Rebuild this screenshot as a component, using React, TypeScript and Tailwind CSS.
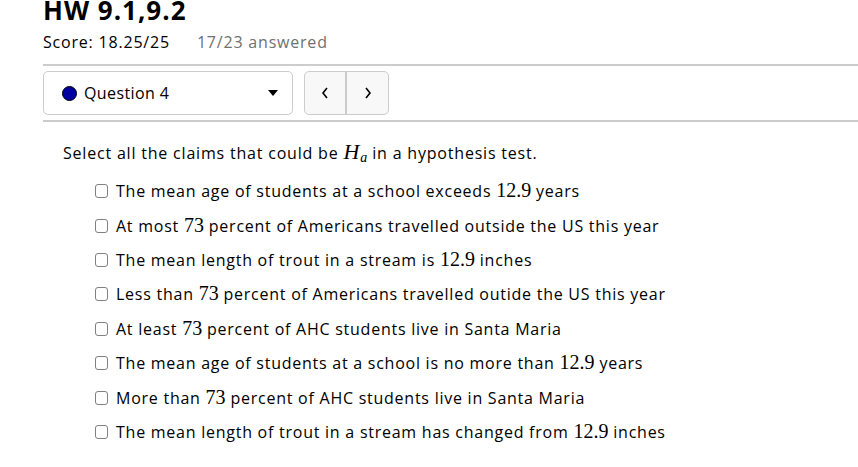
import React from 'react'

const font = {fontFamily: '"Open Sans", "DejaVu Sans", sans-serif'}

function M({children, italic}: {children: React.ReactNode; italic?: boolean}) {
  return (
    <span
      className={'text-[20px] tracking-normal leading-[0] ' + (italic ? 'italic' : '')}
      style={{fontFamily: '"Liberation Serif", "DejaVu Serif", serif'}}
    >
      {children}
    </span>
  )
}

const claims: React.ReactNode[] = [
  <>The mean age of students at a school exceeds <M>12.9</M> years</>,
  <>At most <M>73</M> percent of Americans travelled outside the US this year</>,
  <>The mean length of trout in a stream is <M>12.9</M> inches</>,
  <>Less than <M>73</M> percent of Americans travelled outide the US this year</>,
  <>At least <M>73</M> percent of AHC students live in Santa Maria</>,
  <>The mean age of students at a school is no more than <M>12.9</M> years</>,
  <>More than <M>73</M> percent of AHC students live in Santa Maria</>,
  <>The mean length of trout in a stream has changed from <M>12.9</M> inches</>,
]

export default function App() {
  return (
    <div className="w-[858px] h-[467px] overflow-hidden bg-white text-black" style={font}>
      <div className="pl-[43px]">
        <h1 className="text-[26px] leading-[26px] font-bold mt-[-3px] tracking-[1px]">HW 9.1,9.2</h1>
        <div className="flex gap-[27px] text-[16px] leading-[20px] mt-[9px] tracking-[0.8px]">
          <span>Score: 18.25/25</span>
          <span className="text-[#707070]">17/23 answered</span>
        </div>
        <div className="h-[2px] bg-[#cccccc] mt-[12px]" />
        <div className="flex gap-[11px] mt-[5px]">
          <div className="w-[250px] h-[44px] border border-[#cccccc] rounded-[5px] flex items-center pl-[18px] pr-[14px]">
            <span className="w-[15px] h-[15px] rounded-full bg-[#0000a0] border border-black" />
            <span className="ml-[7px] text-[16px] tracking-[0.4px]">Question 4</span>
            <span className="ml-auto w-0 h-0 border-l-[5px] border-r-[5px] border-t-[6px] border-l-transparent border-r-transparent border-t-black" />
          </div>
          <div className="flex h-[44px] border border-[#cccccc] rounded-[5px] bg-[#f8f8f8]">
            <div className="w-[42px] flex items-center justify-center border-r-2 border-[#cccccc]">
              <svg width="8" height="12" viewBox="0 0 8 12"><path d="M6 1 L2 6 L6 11" stroke="black" strokeWidth="1.6" fill="none" /></svg>
            </div>
            <div className="w-[41px] flex items-center justify-center">
              <svg width="8" height="12" viewBox="0 0 8 12"><path d="M2 1 L6 6 L2 11" stroke="black" strokeWidth="1.6" fill="none" /></svg>
            </div>
          </div>
        </div>
        <div className="h-[2px] bg-[#cccccc] mt-[5px]" />
        <div className="pl-[20px] mt-[19px] text-[16px] leading-[24px] tracking-[0.8px]">
          Select all the claims that could be{' '}
          <M italic>
            <span className="text-[22px]">H</span>
            <span className="text-[14px] align-[-3px] ml-[1px]">a</span>
          </M>{' '}
          in a hypothesis test.
        </div>
        <div className="pl-[52px] mt-[9px] flex flex-col">
          {claims.map((c, i) => (
            <label key={i} className="flex items-center h-[34.4px] text-[16px] tracking-[0.75px]">
              <span className="w-[13px] h-[14px] border border-[#808080] rounded-[3px] mr-[8px] shrink-0" />
              <span>{c}</span>
            </label>
          ))}
        </div>
      </div>
    </div>
  )
}
